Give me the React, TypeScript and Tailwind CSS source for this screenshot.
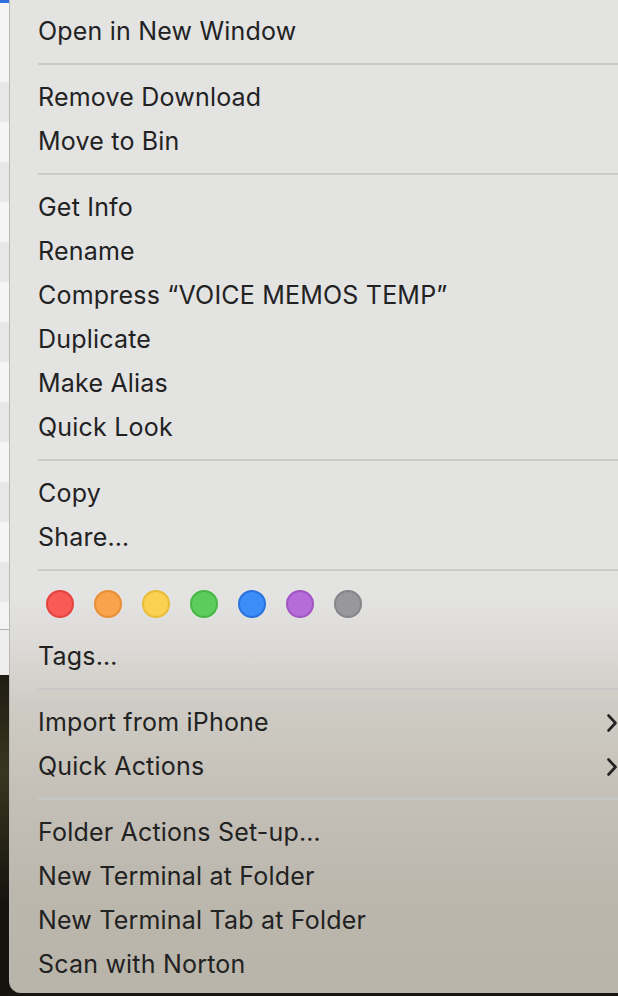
import React from "react";

type Entry =
  | { kind: "item"; label: string; submenu?: boolean }
  | { kind: "sep" }
  | { kind: "tags" };

const entries: Entry[] = [
  { kind: "item", label: "Open in New Window" },
  { kind: "sep" },
  { kind: "item", label: "Remove Download" },
  { kind: "item", label: "Move to Bin" },
  { kind: "sep" },
  { kind: "item", label: "Get Info" },
  { kind: "item", label: "Rename" },
  { kind: "item", label: "Compress \u201CVOICE MEMOS TEMP\u201D" },
  { kind: "item", label: "Duplicate" },
  { kind: "item", label: "Make Alias" },
  { kind: "item", label: "Quick Look" },
  { kind: "sep" },
  { kind: "item", label: "Copy" },
  { kind: "item", label: "Share\u2026" },
  { kind: "sep" },
  { kind: "tags" },
  { kind: "item", label: "Tags\u2026" },
  { kind: "sep" },
  { kind: "item", label: "Import from iPhone", submenu: true },
  { kind: "item", label: "Quick Actions", submenu: true },
  { kind: "sep" },
  { kind: "item", label: "Folder Actions Set-up\u2026" },
  { kind: "item", label: "New Terminal at Folder" },
  { kind: "item", label: "New Terminal Tab at Folder" },
  { kind: "item", label: "Scan with Norton" },
];

const tagColors = [
  "bg-[#fa5a55] border-[#e2443f]",
  "bg-[#f9a34b] border-[#e88f34]",
  "bg-[#fad24f] border-[#e8bc37]",
  "bg-[#5ccd5a] border-[#46b744]",
  "bg-[#3d8cf8] border-[#2872e0]",
  "bg-[#b56bd9] border-[#9f55c4]",
  "bg-[#98989b] border-[#858589]",
];

// finder list rows peeking out behind the menu
const stripes = [
  "h-[3px] bg-[#2f6fdc]",
  "h-[79px] bg-[#f5f5f5]",
  "h-[40px] bg-[#e8e8e8]",
  "h-[40px] bg-[#f5f5f5]",
  "h-[40px] bg-[#e8e8e8]",
  "h-[40px] bg-[#f5f5f5]",
  "h-[40px] bg-[#e8e8e8]",
  "h-[40px] bg-[#f5f5f5]",
  "h-[40px] bg-[#e8e8e8]",
  "h-[40px] bg-[#f5f5f5]",
  "h-[40px] bg-[#e8e8e8]",
  "h-[40px] bg-[#f5f5f5]",
  "h-[40px] bg-[#e8e8e8]",
  "h-[40px] bg-[#f5f5f5]",
  "h-[40px] bg-[#e8e8e8]",
  "h-[27px] bg-[#f3f3f3]",
  "h-[1px] bg-[#b2b2b2]",
  "h-[45px] bg-[#ededed]",
];

const Chevron = () => (
  <svg width="12" height="20" viewBox="0 0 12 20" fill="none" className="ml-auto">
    <path d="M2.5 2.5 L9.5 10 L2.5 17.5" stroke="#222" strokeWidth="2.6" strokeLinecap="round" strokeLinejoin="round" />
  </svg>
);

const App = () => {
  return (
    <div
      className="flex h-[996px] w-[618px] overflow-hidden bg-[#16150f]"
      style={{ fontFamily: "Inter, 'Noto Sans', sans-serif" }}
    >
      <div className="flex w-[9px] shrink-0 flex-col">
        {stripes.map((s, i) => (
          <div key={i} className={s} />
        ))}
        <div className="flex-1 bg-[radial-gradient(circle_at_40%_30%,#3a3520,#14130d_60%)]" />
      </div>

      <div className="h-[993px] w-[640px] shrink-0 rounded-bl-[12px] border-l border-[#b9b9b8] bg-[linear-gradient(180deg,#e3e3e2_0%,#e3e3e2_60%,#dedcd9_64%,#cfccc5_71%,#c4c0b8_80%,#bbb7ad_90%,#b9b4a9_100%)] pt-[9px] text-[#222222]">
        {entries.map((e, i) => {
          if (e.kind === "sep") {
            return (
              <div key={i} className="flex h-[22px] items-center pl-[28px]">
                <div className="h-[2px] w-full bg-[#c6c6c5]/90" />
              </div>
            );
          }
          if (e.kind === "tags") {
            return (
              <div key={i} className="flex h-[53px] gap-[20px] pl-[36px] pt-[9px]">
                {tagColors.map((c, j) => (
                  <div key={j} className={`h-[28px] w-[28px] rounded-full border-2 ${c}`} />
                ))}
              </div>
            );
          }
          return (
            <div key={i} className="flex h-[44px] items-center pl-[28px] pr-[31px] pt-[1px] text-[25px] leading-none tracking-[0.2px]">
              <span>{e.label}</span>
              {e.submenu && <Chevron />}
            </div>
          );
        })}
      </div>
    </div>
  );
};

export default App;
